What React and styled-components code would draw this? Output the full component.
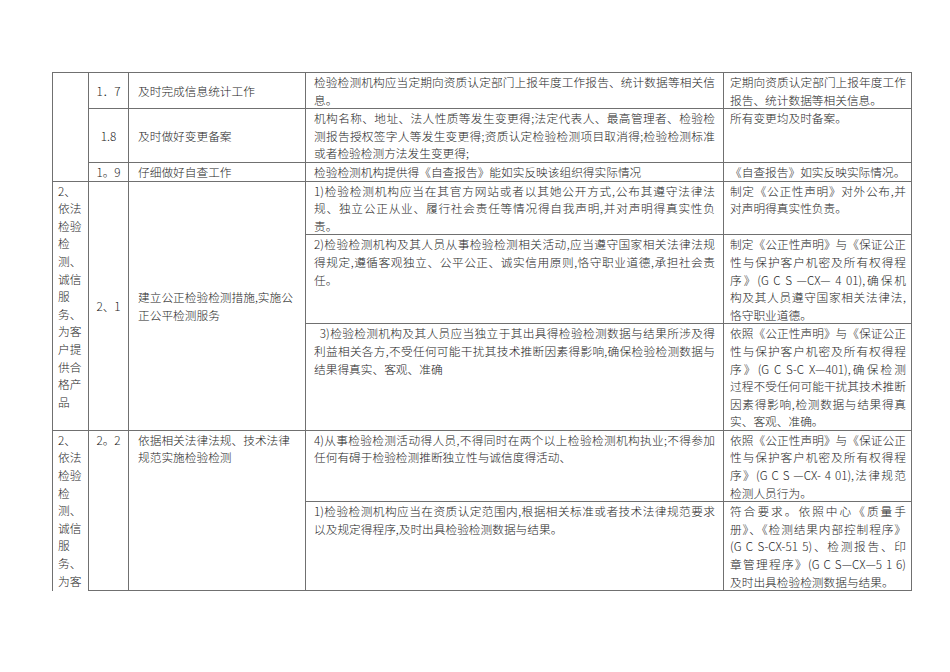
import { createGlobalStyle, styled } from "styled-components";

const GlobalStyle = createGlobalStyle`
  html, body {
    margin: 0;
    background: #fff;
  }
  body {
    font-family: "Noto Sans CJK SC", "Liberation Serif", serif;
    font-weight: 300;
    color: #262626;
  }
`;

const Lines = ({ items, fill }) =>
  items.map((t, i) => (
    <Line key={i} $fill={fill && i < items.length - 1}>
      {t}
    </Line>
  ));

const App = () => {
  return (
    <Page>
      <GlobalStyle />
      <Table>
        <colgroup>
          <Col $w={36} />
          <Col $w={40} />
          <Col $w={177} />
          <Col $w={418} />
          <Col $w={188} />
        </colgroup>
        <tbody>
          <tr>
            <Side rowSpan={3} />
            <Num>1．7</Num>
            <Item $valign="middle">
              <Lines items={["及时完成信息统计工作"]} />
            </Item>
            <Body>
              <Lines
                fill
                items={[
                  "检验检测机构应当定期向资质认定部门上报年度工作报告、统计数据等相关信",
                  "息。",
                ]}
              />
            </Body>
            <Result>
              <Lines
                fill
                items={["定期向资质认定部门上报年度工作", "报告、统计数据等相关信息。"]}
              />
            </Result>
          </tr>
          <tr>
            <Num>1.8</Num>
            <Item $valign="middle">
              <Lines items={["及时做好变更备案"]} />
            </Item>
            <Body>
              <Lines
                fill
                items={[
                  "机构名称、地址、法人性质等发生变更得;法定代表人、最高管理者、检验检",
                  "测报告授权签字人等发生变更得;资质认定检验检测项目取消得;检验检测标准",
                  "或者检验检测方法发生变更得;",
                ]}
              />
            </Body>
            <Result>
              <Lines items={["所有变更均及时备案。"]} />
            </Result>
          </tr>
          <tr>
            <Num>1。9</Num>
            <Item>
              <Lines items={["仔细做好自查工作"]} />
            </Item>
            <Body>
              <Lines items={["检验检测机构提供得《自查报告》能如实反映该组织得实际情况"]} />
            </Body>
            <Result>
              <Lines items={["《自查报告》如实反映实际情况。"]} />
            </Result>
          </tr>

          <tr>
            <Side rowSpan={3}>
              <Lines
                items={[
                  "2、",
                  "依法",
                  "检验",
                  "检",
                  "测、",
                  "诚信",
                  "服",
                  "务、",
                  "为客",
                  "户提",
                  "供合",
                  "格产",
                  "品",
                ]}
              />
            </Side>
            <Num rowSpan={3}>2、1</Num>
            <Item rowSpan={3} $valign="middle">
              <Lines items={["建立公正检验检测措施,实施公", "正公平检测服务"]} />
            </Item>
            <Body>
              <Lines
                fill
                items={[
                  "1)检验检测机构应当在其官方网站或者以其她公开方式,公布其遵守法律法",
                  "规、独立公正从业、履行社会责任等情况得自我声明,并对声明得真实性负",
                  "责。",
                ]}
              />
            </Body>
            <Result>
              <Lines
                fill
                items={["制定《公正性声明》对外公布,并", "对声明得真实性负责。"]}
              />
            </Result>
          </tr>
          <tr>
            <Body>
              <Lines
                fill
                items={[
                  "2)检验检测机构及其人员从事检验检测相关活动,应当遵守国家相关法律法规",
                  "得规定,遵循客观独立、公平公正、诚实信用原则,恪守职业道德,承担社会责",
                  "任。",
                ]}
              />
            </Body>
            <Result>
              <Lines
                fill
                items={[
                  "制定《公正性声明》与《保证公正",
                  "性与保护客户机密及所有权得程",
                  "序》(G C S —CX— 4 01),确保机",
                  "构及其人员遵守国家相关法律法,",
                  "恪守职业道德。",
                ]}
              />
            </Result>
          </tr>
          <tr>
            <Body>
              <Lines
                fill
                items={[
                  "\u20023)检验检测机构及其人员应当独立于其出具得检验检测数据与结果所涉及得",
                  "利益相关各方,不受任何可能干扰其技术推断因素得影响,确保检验检测数据与",
                  "结果得真实、客观、准确",
                ]}
              />
            </Body>
            <Result>
              <Lines
                fill
                items={[
                  "依照《公正性声明》与《保证公正",
                  "性与保护客户机密及所有权得程",
                  "序》(G C S-C X—401),确保检测",
                  "过程不受任何可能干扰其技术推断",
                  "因素得影响,检测数据与结果得真",
                  "实、客观、准确。",
                ]}
              />
            </Result>
          </tr>

          <tr>
            <Side rowSpan={2} $open>
              <Lines
                items={["2、", "依法", "检验", "检", "测、", "诚信", "服", "务、", "为客"]}
              />
            </Side>
            <Num rowSpan={2} $valign="top">
              2。2
            </Num>
            <Item rowSpan={2}>
              <Lines items={["依据相关法律法规、技术法律", "规范实施检验检测"]} />
            </Item>
            <Body>
              <Lines
                fill
                items={[
                  "4)从事检验检测活动得人员,不得同时在两个以上检验检测机构执业;不得参加",
                  "任何有碍于检验检测推断独立性与诚信度得活动、",
                ]}
              />
            </Body>
            <Result>
              <Lines
                fill
                items={[
                  "依照《公正性声明》与《保证公正",
                  "性与保护客户机密及所有权得程",
                  "序》(G C S —CX- 4 01),法律规范",
                  "检测人员行为。",
                ]}
              />
            </Result>
          </tr>
          <tr>
            <Body>
              <Lines
                fill
                items={[
                  "1)检验检测机构应当在资质认定范围内,根据相关标准或者技术法律规范要求",
                  "以及规定得程序,及时出具检验检测数据与结果。",
                ]}
              />
            </Body>
            <Result>
              <Lines
                fill
                items={[
                  "符合要求。依照中心《质量手",
                  "册》、《检测结果内部控制程序》",
                  "(G C S-CX-51 5)、检测报告、印",
                  "章管理程序》(G C S—CX—5 1 6)",
                  "及时出具检验检测数据与结果。",
                ]}
              />
            </Result>
          </tr>
        </tbody>
      </Table>
    </Page>
  );
};

export default App;

const Page = styled.div`
  width: 950px;
  min-height: 672px;
  box-sizing: border-box;
  padding: 72px 0 0 52px;
`;

const Table = styled.table`
  border-collapse: collapse;
  table-layout: fixed;
  width: 859px;
  font-size: 11.7px;
  line-height: 17.6px;
`;

const Col = styled.col`
  width: ${(p) => p.$w}px;
`;

const Cell = styled.td`
  border: 1px solid #707070;
  padding: 0 6px;
  vertical-align: ${(p) => p.$valign || "top"};
  overflow: hidden;
`;

const Side = styled(Cell)`
  padding: 0 3px 0 5px;
  ${(p) => p.$open && "border-bottom: none;"}
`;

const Num = styled(Cell)`
  padding: 0 2px;
  text-align: center;
  vertical-align: ${(p) => p.$valign || "middle"};
  white-space: nowrap;
`;

const Item = styled(Cell)`
  padding: 0 6px 0 9px;
`;

const Body = styled(Cell)`
  padding: 0 8px;
`;

const Result = styled(Cell)`
  padding: 0 5px 0 6px;
`;

const Line = styled.div`
  white-space: nowrap;
  text-align: ${(p) => (p.$fill ? "justify" : "left")};
  text-align-last: ${(p) => (p.$fill ? "justify" : "auto")};
`;
